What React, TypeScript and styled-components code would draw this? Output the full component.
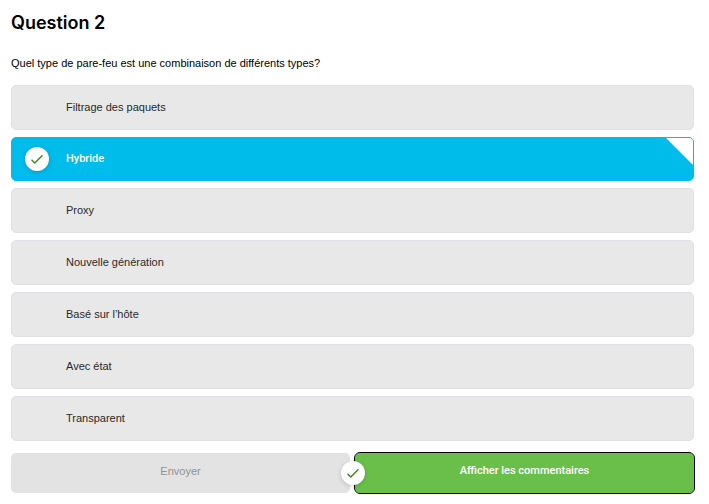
import React, { useState } from "react";
import styled, { createGlobalStyle, css } from "styled-components";

const GlobalStyle = createGlobalStyle`
  *, *::before, *::after { box-sizing: border-box; }
  body {
    margin: 0;
    background: #fff;
    color: #000;
    font-family: "Liberation Sans", Arial, sans-serif;
    font-size: 11px;
    line-height: 16px;
  }
`;

const Page = styled.main`
  padding: 12px 15px 11px 11px;
`;

const Title = styled.h1`
  margin: 0 0 21px;
  font-family: Inter, sans-serif;
  font-size: 18px;
  line-height: 22px;
  font-weight: 600;
`;

const Choices = styled.fieldset`
  display: flex;
  flex-direction: column;
  gap: 7px;
  min-width: 0;
  margin: 0;
  padding: 0;
  border: 0;
`;

const Prompt = styled.legend`
  padding: 0 0 14px;
`;

const mediumText = css`
  font-family: Roboto, sans-serif;
  font-weight: 500;
`;

const Choice = styled.label<{ $selected: boolean }>`
  position: relative;
  display: grid;
  grid-template-columns: 24px 1fr;
  column-gap: 17px;
  align-items: center;
  padding: 13px 13px 14px;
  border: 1px solid #dfe1e8;
  border-radius: 5px;
  background: #e8e8e8;
  color: #282828;
  cursor: pointer;

  &:has(:focus-visible) {
    outline: 1px solid #000;
  }

  ${({ $selected }) =>
    $selected &&
    css`
      padding: 9px 13px;
      border-color: #00bceb;
      background: #00bceb;
      color: #fff;
      ${mediumText}
    `}
`;

const HiddenRadio = styled.input`
  position: absolute;
  opacity: 0;
  pointer-events: none;
`;

const ChoiceText = styled.span`
  grid-column: 2;
`;

const Corner = styled.span`
  position: absolute;
  top: 0;
  right: 0;
  width: 27px;
  height: 27px;
  border-top-right-radius: 4px;
  background: #fff;
  clip-path: polygon(0 0, 100% 0, 100% 100%);
`;

const Badge = styled.span`
  display: flex;
  align-items: center;
  justify-content: center;
  width: 24px;
  height: 24px;
  border-radius: 50%;
  background: #fff;
  color: #3c8527;
  box-shadow: 0 1px 4px rgba(0, 0, 0, 0.18);
`;

const Actions = styled.div`
  position: relative;
  display: grid;
  grid-template-columns: 1fr 1fr;
  gap: 5px;
  margin-top: 12px;
`;

const ActionBadge = styled(Badge)`
  position: absolute;
  top: 50%;
  left: 50%;
  transform: translate(-50%, -50%);
`;

const Button = styled.button<{ $primary?: boolean }>`
  padding: 10px 12px 14px;
  border: 0;
  border-radius: 5px;
  background: #e3e3e3;
  color: #929292;
  font: inherit;

  ${({ $primary }) =>
    $primary &&
    css`
      background: #6abf4b;
      color: #fff;
      outline: 1px solid #000;
      ${mediumText}
    `}
`;

const CheckIcon = () => (
  <svg width="14" height="12" viewBox="0 0 14 12" fill="none" aria-hidden="true">
    <path d="M1.5 6.8 4.8 10 12.5 2.2" stroke="currentColor" strokeWidth="1.4" />
  </svg>
);

const answers = [
  "Filtrage des paquets",
  "Hybride",
  "Proxy",
  "Nouvelle génération",
  "Basé sur l’hôte",
  "Avec état",
  "Transparent",
];

export default function App() {
  const [selected, setSelected] = useState("Hybride");

  return (
    <>
      <GlobalStyle />
      <Page>
        <Title>Question 2</Title>
        <Choices>
          <Prompt>Quel type de pare-feu est une combinaison de différents types?</Prompt>
          {answers.map((answer) => (
            <Choice key={answer} $selected={answer === selected}>
              <HiddenRadio
                type="radio"
                name="answer"
                value={answer}
                checked={answer === selected}
                onChange={() => setSelected(answer)}
              />
              {answer === selected && (
                <Badge>
                  <CheckIcon />
                </Badge>
              )}
              <ChoiceText>{answer}</ChoiceText>
              {answer === selected && <Corner />}
            </Choice>
          ))}
        </Choices>
        <Actions>
          <Button type="button" disabled>
            Envoyer
          </Button>
          <Button type="button" $primary>
            Afficher les commentaires
          </Button>
          <ActionBadge>
            <CheckIcon />
          </ActionBadge>
        </Actions>
      </Page>
    </>
  );
}
